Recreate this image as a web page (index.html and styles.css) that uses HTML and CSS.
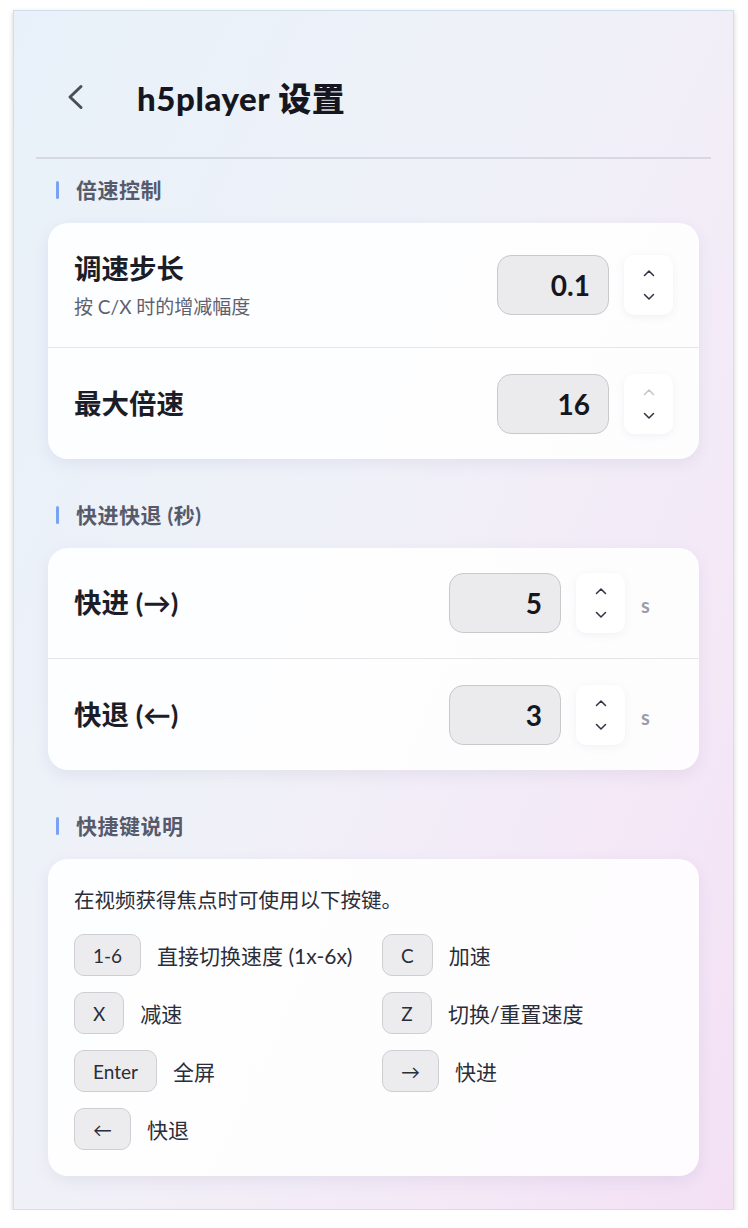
FILE: index.html
```html
<!DOCTYPE html>
<html lang="zh">
<head>
<meta charset="utf-8">
<title>h5player 设置</title>
<link rel="stylesheet" href="styles.css">
</head>
<body>
<div class="frame">
  <header class="header">
    <button class="back" aria-label="返回">
      <svg width="20" height="26" viewBox="0 0 20 26"><polyline points="16,2.5 5,13 16,23.5" fill="none" stroke="#4b4e5c" stroke-width="3" stroke-linecap="round" stroke-linejoin="round"/></svg>
    </button>
    <h1 class="title">h5player 设置</h1>
  </header>

  <h2 class="section-title"><span class="bar"></span>倍速控制</h2>
  <div class="card">
    <div class="row tall">
      <div class="label-block">
        <div class="label">调速步长</div>
        <div class="sub">按 C/X 时的增减幅度</div>
      </div>
      <div class="controls">
        <div class="num">0.1</div>
        <div class="spin">
          <svg class="chev" width="12" height="8" viewBox="0 0 12 8"><polyline points="1.5,6.5 6,2 10.5,6.5"/></svg>
          <svg class="chev" width="12" height="8" viewBox="0 0 12 8"><polyline points="1.5,1.5 6,6 10.5,1.5"/></svg>
        </div>
      </div>
    </div>
    <div class="row">
      <div class="label">最大倍速</div>
      <div class="controls">
        <div class="num">16</div>
        <div class="spin">
          <svg class="chev off" width="12" height="8" viewBox="0 0 12 8"><polyline points="1.5,6.5 6,2 10.5,6.5"/></svg>
          <svg class="chev" width="12" height="8" viewBox="0 0 12 8"><polyline points="1.5,1.5 6,6 10.5,1.5"/></svg>
        </div>
      </div>
    </div>
  </div>

  <h2 class="section-title"><span class="bar"></span>快进快退 (秒)</h2>
  <div class="card">
    <div class="row">
      <div class="label">快进 (→)</div>
      <div class="controls">
        <div class="num">5</div>
        <div class="spin">
          <svg class="chev" width="12" height="8" viewBox="0 0 12 8"><polyline points="1.5,6.5 6,2 10.5,6.5"/></svg>
          <svg class="chev" width="12" height="8" viewBox="0 0 12 8"><polyline points="1.5,1.5 6,6 10.5,1.5"/></svg>
        </div>
        <span class="unit">s</span>
      </div>
    </div>
    <div class="row">
      <div class="label">快退 (←)</div>
      <div class="controls">
        <div class="num">3</div>
        <div class="spin">
          <svg class="chev" width="12" height="8" viewBox="0 0 12 8"><polyline points="1.5,6.5 6,2 10.5,6.5"/></svg>
          <svg class="chev" width="12" height="8" viewBox="0 0 12 8"><polyline points="1.5,1.5 6,6 10.5,1.5"/></svg>
        </div>
        <span class="unit">s</span>
      </div>
    </div>
  </div>

  <h2 class="section-title"><span class="bar"></span>快捷键说明</h2>
  <div class="card help">
    <p class="intro">在视频获得焦点时可使用以下按键。</p>
    <div class="keys">
      <div class="key-item"><span class="key">1-6</span><span class="desc">直接切换速度 (1x-6x)</span></div>
      <div class="key-item"><span class="key">C</span><span class="desc">加速</span></div>
      <div class="key-item"><span class="key">X</span><span class="desc">减速</span></div>
      <div class="key-item"><span class="key">Z</span><span class="desc">切换/重置速度</span></div>
      <div class="key-item"><span class="key">Enter</span><span class="desc">全屏</span></div>
      <div class="key-item"><span class="key">→</span><span class="desc">快进</span></div>
      <div class="key-item"><span class="key">←</span><span class="desc">快退</span></div>
    </div>
  </div>
</div>
</body>
</html>
```

FILE: styles.css
```css
* { box-sizing: border-box; }
html, body { margin: 0; padding: 0; background: #ffffff; }
body {
  padding: 10px 0 0 13px;
  font-family: "Lato", "Noto Sans CJK SC", sans-serif;
  color: #1d1f2b;
}
.frame {
  width: 721px;
  height: 1200px;
  border: 1px solid #cfe0ec;
  box-shadow: 0 2px 5px rgba(0, 0, 0, 0.18);
  background: linear-gradient(115deg, #e8f1fa 0%, #f0f1f8 45%, #f4e9f7 75%, #f3e0f5 100%);
  padding: 0 34px;
}
.header {
  margin: 0 -12px;
  height: 148px;
  padding: 26px 0 0 19px;
  display: flex;
  align-items: center;
  border-bottom: 2px solid rgba(205, 207, 218, 0.7);
}
.back {
  width: 40px;
  height: 40px;
  border: 0;
  background: none;
  padding: 0;
  display: flex;
  align-items: center;
  justify-content: center;
  margin-right: 42px;
}
.title {
  margin: 0;
  font-size: 33px;
  font-weight: 900;
  letter-spacing: 0.6px;
  color: #15161f;
}
.section-title {
  margin: 17px 0 19px;
  height: 28px;
  line-height: 28px;
  padding-left: 8px;
  display: flex;
  align-items: center;
  font-size: 21px;
  font-weight: 700;
  color: #565a6b;
  letter-spacing: 0.5px;
}
.card + .section-title { margin-top: 42px; }
.bar {
  width: 3px;
  height: 18px;
  border-radius: 2px;
  background: #7aa2f2;
  margin-right: 17px;
}
.card {
  background: rgba(255, 255, 255, 0.88);
  border-radius: 20px;
  box-shadow: 0 5px 16px rgba(70, 70, 110, 0.08);
}
.row {
  height: 111px;
  padding: 0 26px;
  display: flex;
  align-items: center;
  justify-content: space-between;
  border-bottom: 1px solid #e6e6ea;
}
.row:last-child { height: 111px; border-bottom: 0; }
.row.tall { height: 125px; }
.label {
  font-size: 27.5px;
  font-weight: 700;
  line-height: 36px;
  color: #1b1d28;
}
.sub {
  margin-top: 7px;
  font-size: 19px;
  line-height: 26px;
  color: #5d6070;
}
.controls {
  display: flex;
  align-items: center;
}
.num {
  width: 112px;
  height: 60px;
  border-radius: 14px;
  background: #ebebed;
  border: 1.5px solid #c9c9cd;
  display: flex;
  align-items: center;
  justify-content: flex-end;
  padding-right: 18px;
  font-size: 28px;
  font-weight: 700;
  color: #15161f;
}
.spin {
  margin-left: 15px;
  width: 49px;
  height: 60px;
  background: #ffffff;
  border-radius: 10px;
  box-shadow: 0 2px 8px rgba(80, 80, 110, 0.08);
  display: flex;
  flex-direction: column;
  align-items: center;
  justify-content: center;
  gap: 16px;
}
.chev polyline {
  fill: none;
  stroke: #2e3140;
  stroke-width: 1.5;
  stroke-linecap: round;
  stroke-linejoin: round;
}
.chev.off polyline { stroke: #c4c5cc; }
.unit {
  width: 32px;
  margin-left: 16px;
  font-size: 20px;
  font-weight: 700;
  color: #9a9cab;
  padding-top: 4px;
}
.help { padding: 26px; }
.intro {
  margin: 0 0 19px;
  font-size: 20.5px;
  line-height: 30px;
  color: #2a2d3a;
}
.keys {
  display: grid;
  grid-template-columns: 292px 292px;
  column-gap: 16px;
  row-gap: 16px;
}
.key-item {
  display: flex;
  align-items: center;
  height: 42px;
}
.key {
  height: 42px;
  min-width: 50px;
  padding: 0 18px;
  display: inline-flex;
  align-items: center;
  justify-content: center;
  background: #ececee;
  border: 1.5px solid #cfcfd3;
  border-radius: 10px;
  font-size: 19px;
  color: #2a2d3a;
  margin-right: 16px;
}
.desc {
  font-size: 21px;
  color: #2a2d3a;
}
```
